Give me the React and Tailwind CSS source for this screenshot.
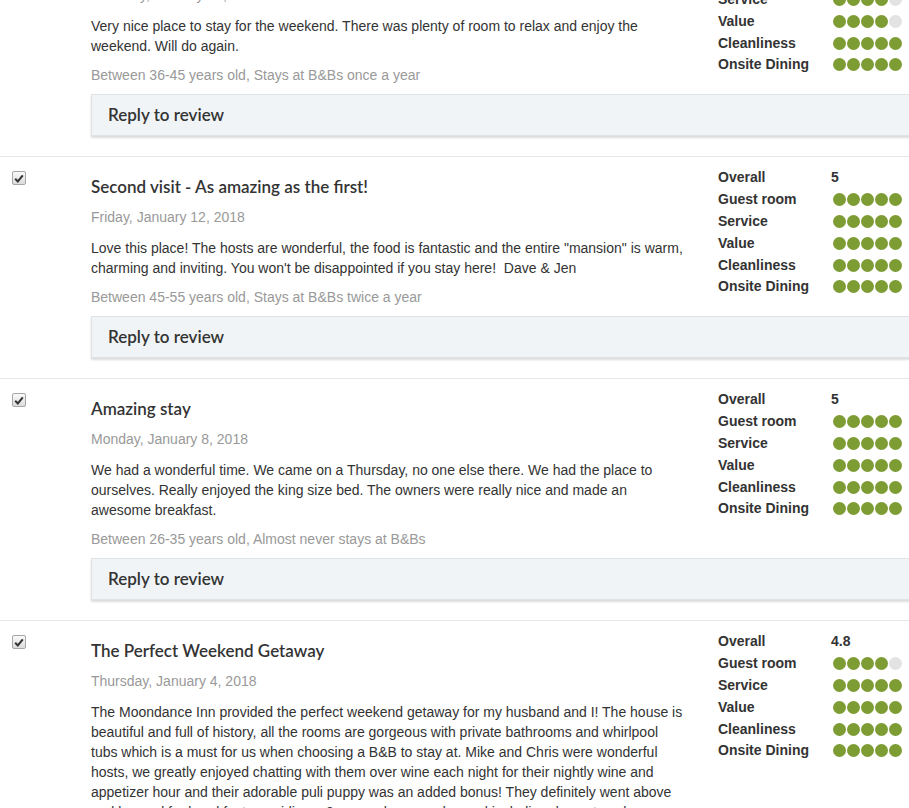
import React from 'react'

const reviews = [
  {
    title: 'Great weekend away',
    date: 'Saturday, January 13, 2018',
    body: 'Very nice place to stay for the weekend. There was plenty of room to relax and enjoy the weekend. Will do again.',
    meta: 'Between 36-45 years old, Stays at B&Bs once a year',
    overall: '4.6',
    scores: [5, 4, 4, 5, 5],
  },
  {
    title: 'Second visit - As amazing as the first!',
    date: 'Friday, January 12, 2018',
    body: 'Love this place! The hosts are wonderful, the food is fantastic and the entire "mansion" is warm, charming and inviting. You won\'t be disappointed if you stay here!\u00a0 Dave & Jen',
    meta: 'Between 45-55 years old, Stays at B&Bs twice a year',
    overall: '5',
    scores: [5, 5, 5, 5, 5],
  },
  {
    title: 'Amazing stay',
    date: 'Monday, January 8, 2018',
    body: 'We had a wonderful time. We came on a Thursday, no one else there. We had the place to ourselves. Really enjoyed the king size bed. The owners were really nice and made an awesome breakfast.',
    meta: 'Between 26-35 years old, Almost never stays at B&Bs',
    overall: '5',
    scores: [5, 5, 5, 5, 5],
  },
  {
    title: 'The Perfect Weekend Getaway',
    date: 'Thursday, January 4, 2018',
    body: 'The Moondance Inn provided the perfect weekend getaway for my husband and I! The house is beautiful and full of history, all the rooms are gorgeous with private bathrooms and whirlpool tubs which is a must for us when choosing a B&B to stay at. Mike and Chris were wonderful hosts, we greatly enjoyed chatting with them over wine each night for their nightly wine and appetizer hour and their adorable puli puppy was an added bonus! They definitely went above and beyond for breakfast, providing a 3 course homemade meal including dessert each morning.',
    meta: 'Between 36-45 years old, Stays at B&Bs a few times a year',
    overall: '4.8',
    scores: [4, 5, 5, 5, 5],
  },
]

const labels = ['Guest room', 'Service', 'Value', 'Cleanliness', 'Onsite Dining']

function Dots({ n }) {
  return (
    <div className="flex gap-px pl-[2px]">
      {[0, 1, 2, 3, 4].map((i) => (
        <span
          key={i}
          className={`w-[13px] h-[13px] rounded-full ${i < n ? 'bg-[#7d9c33]' : 'bg-[#e3e3e3]'}`}
        />
      ))}
    </div>
  )
}

function Check() {
  return (
    <span className="mt-[14px] ml-[12px] w-[14px] h-[14px] rounded-[2px] border border-[#a6a6a6] bg-gradient-to-b from-[#fafafa] to-[#dcdcdc] flex items-center justify-center">
      <svg width="10" height="9" viewBox="0 0 10 9">
        <path d="M1.2 4.8 L3.8 7.4 L8.8 1.4" fill="none" stroke="#333" strokeWidth="2" />
      </svg>
    </span>
  )
}

function Review({ r }) {
  return (
    <div className="flex border-b border-[#e6e6e6] pb-[20px]">
      <div className="w-[91px] shrink-0">
        <Check />
      </div>
      <div className="flex-1 pt-[10px]">
        <div className="flex">
          <div className="flex-1 pr-[32px] pt-[8px]">
            <h3 className="text-[17px] leading-[24px] font-semibold text-[#333] font-['Lato',sans-serif]">{r.title}</h3>
            <div className="mt-[8px] text-[14px] leading-[20px] text-[#999]">{r.date}</div>
            <p className="mt-[11px] text-[14px] leading-[20px] text-[#333]">{r.body}</p>
            <div className="mt-[9px] text-[14px] leading-[20px] text-[#999]">{r.meta}</div>
          </div>
          <div className="w-[191px] shrink-0 text-[14px] font-bold text-[#333]">
            <div className="flex items-center h-[21.8px]">
              <span className="w-[113px]">Overall</span>
              <span>{r.overall}</span>
            </div>
            {labels.map((l, i) => (
              <div key={l} className="flex items-center h-[21.8px]">
                <span className="w-[113px]">{l}</span>
                <Dots n={r.scores[i]} />
              </div>
            ))}
          </div>
        </div>
        <div className="mt-[9px] -mr-4 h-[42px] flex items-center pl-[16px] bg-[#f0f4f6] border border-[#dfe3e5] shadow-[0_2px_2px_rgba(0,0,0,0.14)] text-[17px] font-semibold text-[#333] font-['Lato',sans-serif]">
          Reply to review
        </div>
      </div>
    </div>
  )
}

export default function App() {
  return (
    <div className="w-[909px] h-[808px] overflow-hidden bg-white font-['Liberation_Sans',Arial,sans-serif]">
      <div className="-mt-[65px]">
        {reviews.map((r, i) => (
          <Review key={i} r={r} />
        ))}
      </div>
    </div>
  )
}
